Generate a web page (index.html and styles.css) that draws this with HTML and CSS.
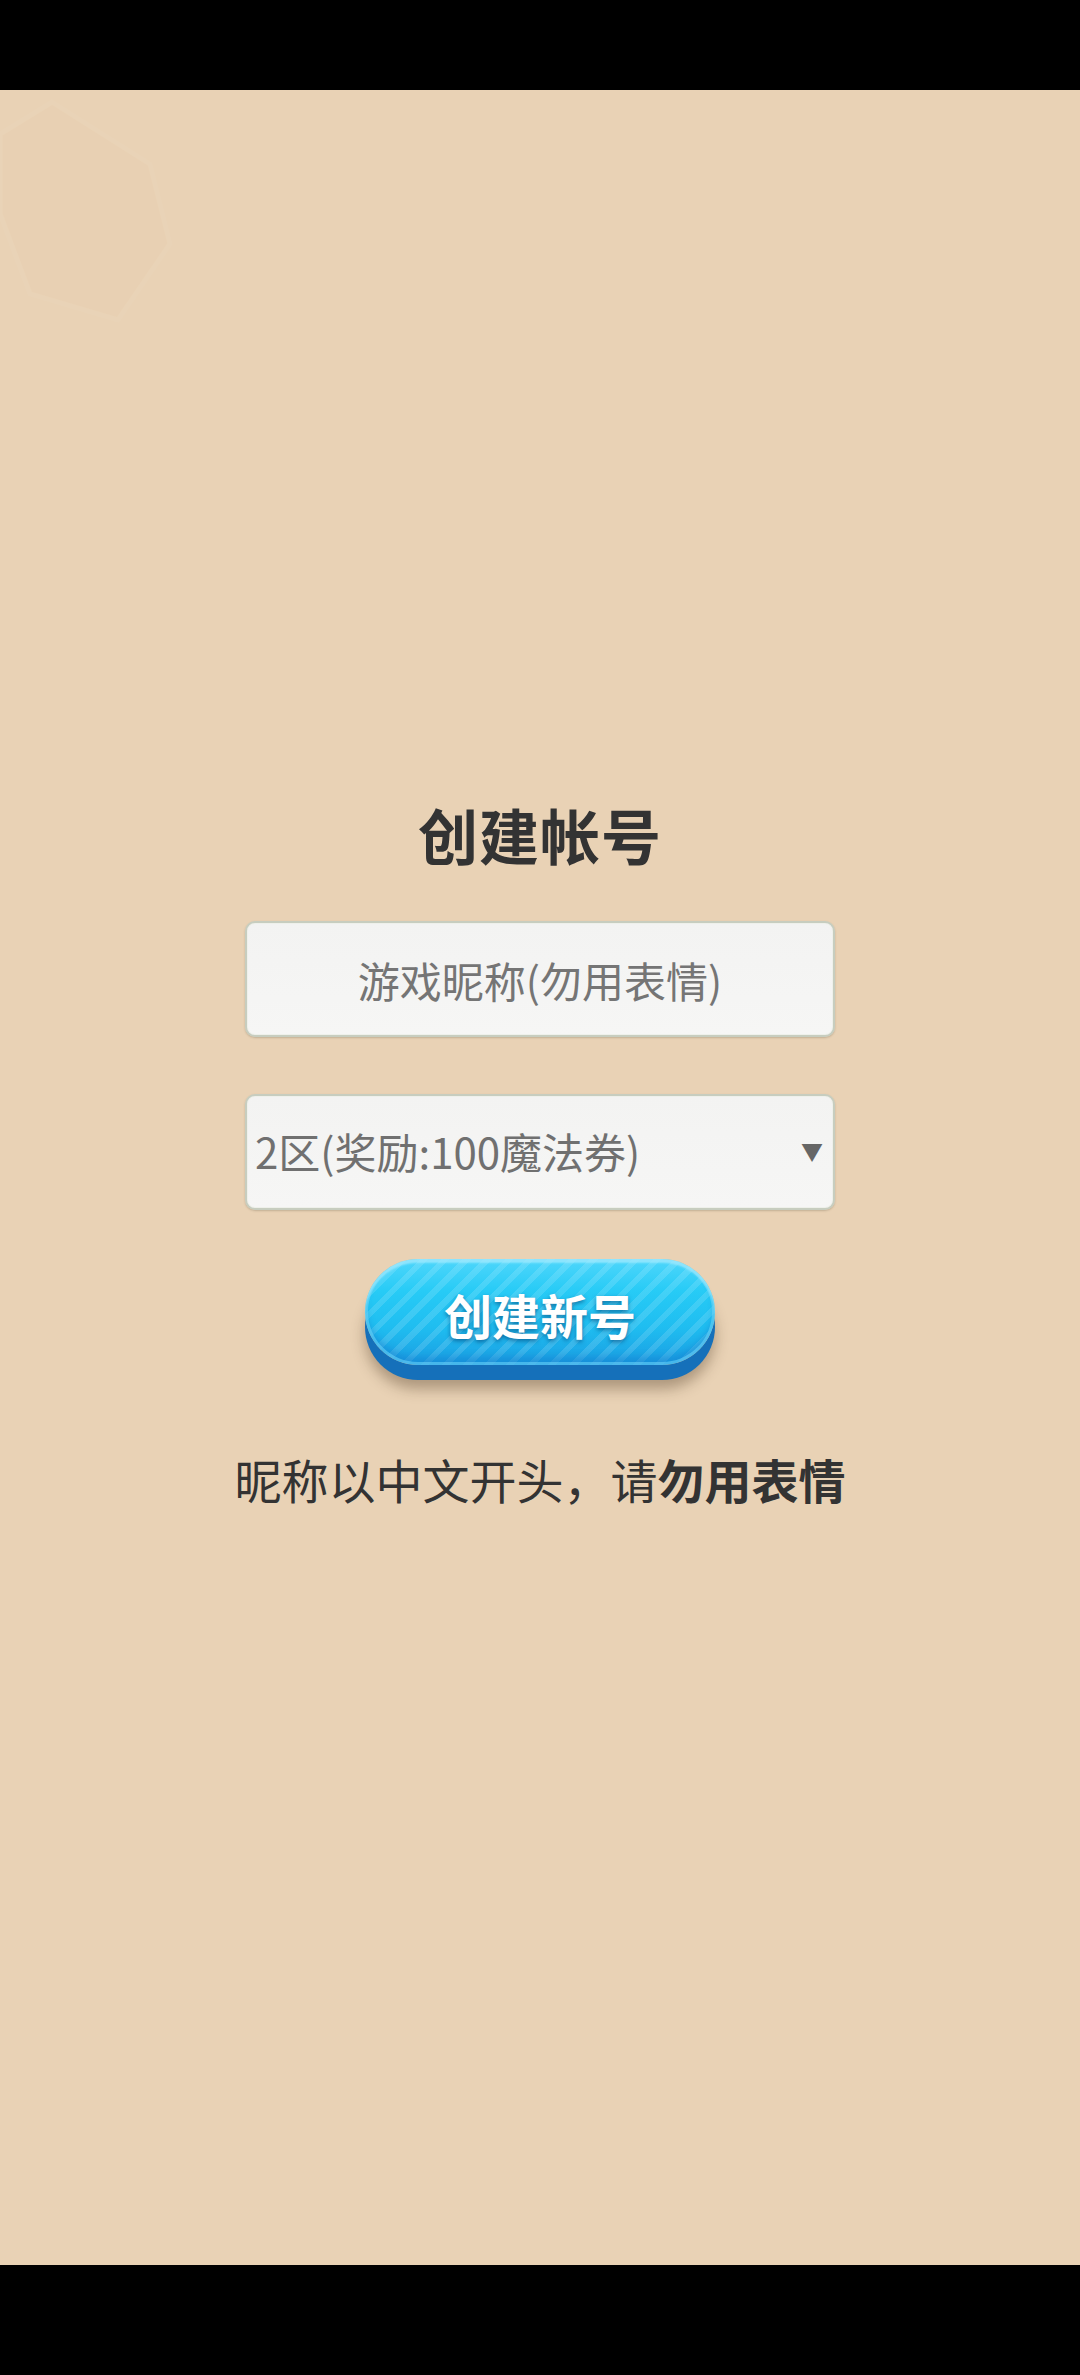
FILE: index.html
```html
<!DOCTYPE html>
<html lang="zh-CN">
<head>
<meta charset="utf-8">
<title>创建帐号</title>
<link rel="stylesheet" href="styles.css">
</head>
<body>
<div class="screen">
  <div class="status-bar"></div>
  <main class="main">
    <svg class="deco" width="180" height="240" viewBox="0 0 180 240" aria-hidden="true">
      <polygon points="52,8 150,70 170,150 118,226 30,200 0,120 0,40" fill="#e8cfb1" stroke="#ebd6ba" stroke-width="5" opacity="0.45"/>
    </svg>
    <h1 class="title">创建帐号</h1>
    <input class="field field-input" type="text" placeholder="游戏昵称(勿用表情)">
    <div class="field field-select">
      <span class="select-text">2区(奖励:100魔法券)</span>
      <span class="select-arrow">▼</span>
    </div>
    <button class="btn" type="button"><span class="btn-label">创建新号</span></button>
    <p class="hint">昵称以中文开头，请<b>勿用表情</b></p>
  </main>
  <div class="nav-bar"></div>
</div>
</body>
</html>
```
FILE: styles.css
```css
* { box-sizing: border-box; }
html, body { margin: 0; padding: 0; background: #000; }
body {
  font-family: "Noto Sans CJK SC", "Noto Sans", sans-serif;
  width: 1080px;
  height: 2375px;
  overflow: hidden;
}
.screen {
  display: flex;
  flex-direction: column;
  height: 2375px;
}
.status-bar { height: 90px; background: #000; flex: none; }
.nav-bar { height: 110px; background: #000; flex: none; }
.main {
  position: relative;
  flex: 1;
  background: #e9d2b5;
  display: flex;
  flex-direction: column;
  align-items: center;
  padding-top: 714px;
  overflow: hidden;
}
.deco { position: absolute; left: 0; top: 4px; }
.title {
  margin: 0;
  font-size: 60px;
  line-height: 60px;
  font-weight: 700;
  color: #333;
  letter-spacing: 1px;
}
.field {
  width: 590px;
  height: 116px;
  border: 2px solid #c7cdbf;
  border-radius: 10px;
  background: linear-gradient(#f3f3f2, #f6f6f5);
  box-shadow: 0 1px 2px rgba(80, 70, 50, 0.25), inset 0 0 0 1px #eef0ea;
  font-family: "Noto Sans CJK SC", "Noto Sans", sans-serif;
  font-size: 42px;
  color: #707070;
}
.field-input {
  margin-top: 57px;
  text-align: center;
  outline: none;
  padding: 0 10px;
}
.field-input::placeholder { color: #757575; }
.field-select {
  margin-top: 57px;
  display: flex;
  align-items: center;
  justify-content: space-between;
  padding: 0 10px 0 8px;
}
.select-text { line-height: 1; padding-bottom: 2px; }
.select-arrow { font-size: 22px; color: #666; padding-bottom: 4px; }
.btn {
  margin-top: 49px;
  width: 350px;
  height: 106px;
  border: none;
  border-radius: 53px;
  padding: 0;
  background:
    repeating-linear-gradient(135deg, rgba(255,255,255,0) 0 9px, rgba(255,255,255,0.13) 9px 15px),
    linear-gradient(#4fd6fb 0%, #27cbf6 30%, #1fbdf0 65%, #1a9de2 100%);
  box-shadow:
    inset 0 4px 2px rgba(180, 240, 255, 0.55),
    inset 0 0 0 3px rgba(110, 215, 250, 0.55),
    inset 0 -8px 6px rgba(20, 130, 210, 0.5),
    0 15px 0 #1570ba,
    0 24px 14px rgba(60, 40, 20, 0.35);
  display: flex;
  align-items: center;
  justify-content: center;
  cursor: pointer;
}
.btn-label {
  font-family: "Noto Sans CJK SC", "Noto Sans", sans-serif;
  font-size: 48px;
  font-weight: 700;
  color: #fff;
  line-height: 1;
  text-shadow: 0 2px 4px rgba(0, 50, 100, 0.55);
  padding-top: 4px;
}
.hint {
  margin: 90px 0 0;
  font-size: 47px;
  line-height: 47px;
  color: #333;
}
.hint b { font-weight: 700; }
```
